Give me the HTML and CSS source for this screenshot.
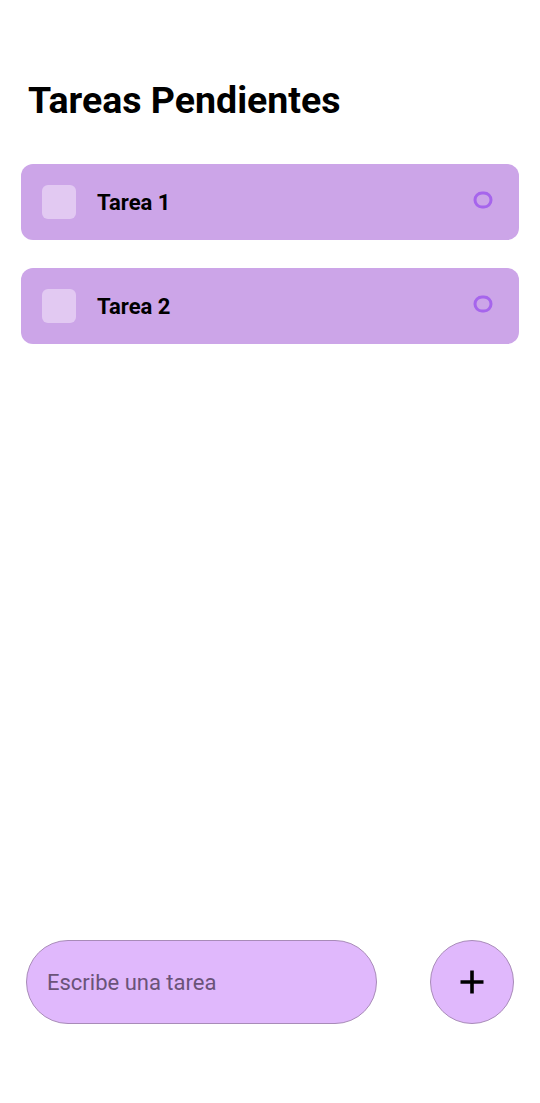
FILE: index.html
```html
<!DOCTYPE html>
<html lang="es">
<head>
<meta charset="utf-8">
<title>Tareas Pendientes</title>
<link rel="stylesheet" href="styles.css">
</head>
<body>
<div class="app">
  <h1 class="title">Tareas Pendientes</h1>
  <ul class="list">
    <li class="task">
      <span class="check"></span>
      <span class="task-name">Tarea 1</span>
      <svg class="status" width="20" height="18" viewBox="0 0 20 18"><rect x="2" y="2" width="16" height="14" rx="7" fill="none" stroke="#a665ec" stroke-width="3"/></svg>
    </li>
    <li class="task">
      <span class="check"></span>
      <span class="task-name">Tarea 2</span>
      <svg class="status" width="20" height="18" viewBox="0 0 20 18"><rect x="2" y="2" width="16" height="14" rx="7" fill="none" stroke="#a665ec" stroke-width="3"/></svg>
    </li>
  </ul>
  <div class="bar">
    <div class="input">Escribe una tarea</div>
    <button class="add">
      <svg width="26" height="26" viewBox="0 0 26 26"><path d="M13 1.5v23M1.5 13h23" stroke="#000" stroke-width="3.6"/></svg>
    </button>
  </div>
</div>
</body>
</html>
```

FILE: styles.css
```css
* { box-sizing: border-box; }
html, body { margin: 0; padding: 0; background: #fff; }
body { font-family: Roboto, "Noto Sans", sans-serif; color: #000; }
.app {
  height: 1103px;
  display: flex;
  flex-direction: column;
  padding: 0 21px 0 21px;
}
.title {
  margin: 77px 0 0 7px;
  font-size: 37.5px;
  line-height: 46px;
  font-weight: 700;
}
.list {
  list-style: none;
  margin: 41px 0 0 0;
  padding: 0;
  display: flex;
  flex-direction: column;
  gap: 28px;
}
.task {
  height: 76px;
  background: #cca5e8;
  border-radius: 12px;
  display: flex;
  align-items: center;
  padding: 0 26px 0 21px;
}
.check {
  width: 34px;
  height: 34px;
  border-radius: 6px;
  background: #e2c9f2;
  flex: none;
}
.task-name {
  margin-left: 21px;
  font-size: 22px;
  font-weight: 700;
  flex: 1;
}
.status { flex: none; margin-top: -4px; }
.bar {
  margin-top: auto;
  margin-bottom: 79px;
  display: flex;
  align-items: center;
  justify-content: space-between;
  padding: 0 5px 0 5px;
}
.input {
  width: 351px;
  height: 84px;
  border-radius: 42px;
  background: #e0b8fc;
  border: 1px solid #a88bb8;
  display: flex;
  align-items: center;
  padding-left: 20px;
  font-size: 22px;
  color: #6a5378;
}
.add {
  width: 84px;
  height: 84px;
  border-radius: 50%;
  background: #e0b8fc;
  border: 1px solid #a88bb8;
  display: flex;
  align-items: center;
  justify-content: center;
  padding: 0;
}
```
